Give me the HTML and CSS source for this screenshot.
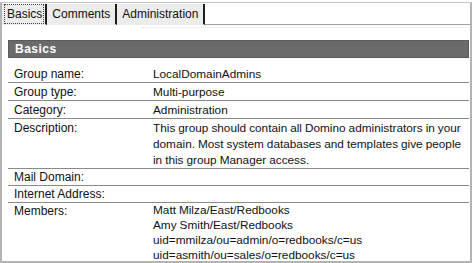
FILE: index.html
```html
<!DOCTYPE html>
<html lang="en">
<head>
  <meta charset="UTF-8" />
  <title>Group - Basics</title>
  <link rel="stylesheet" href="styles.css">
</head>
<body>
  <div class="window">
    <div class="tabs">
      <div class="tab active"><span>Basics</span></div>
      <div class="tab"><span>Comments</span></div>
      <div class="tab"><span>Administration</span></div>
      <div class="tab-fill"></div>
    </div>
    <div class="dots"></div>

    <div class="content">
      <div class="section-title">Basics</div>

      <div class="row">
        <div class="label">Group name:</div>
        <div class="value">LocalDomainAdmins</div>
      </div>
      <div class="row">
        <div class="label">Group type:</div>
        <div class="value">Multi-purpose</div>
      </div>
      <div class="row">
        <div class="label">Category:</div>
        <div class="value">Administration</div>
      </div>
      <div class="row">
        <div class="label">Description:</div>
        <div class="value">This group should contain all Domino administrators in your domain. Most system databases and templates give people in this group Manager access.</div>
      </div>
      <div class="row short">
        <div class="label">Mail Domain:</div>
        <div class="value"></div>
      </div>
      <div class="row short">
        <div class="label">Internet Address:</div>
        <div class="value"></div>
      </div>
      <div class="row members">
        <div class="label">Members:</div>
        <div class="value">
          Matt Milza/East/Redbooks<br>
          Amy Smith/East/Redbooks<br>
          uid=mmilza/ou=admin/o=redbooks/c=us<br>
          uid=asmith/ou=sales/o=redbooks/c=us
        </div>
      </div>
    </div>
  </div>
</body>
</html>
```

FILE: styles.css
```css
body {
  margin: 0;
  padding-top: 2px;
  background: #fff;
  font-family: "Liberation Sans", Arial, sans-serif;
  font-size: 12px;
  color: #111;
}

.window {
  height: 261px;
  box-sizing: border-box;
  border: 2px solid #b3b3b3;
  border-top: 1px solid #c4c4c4;
  overflow: hidden;
}

.tabs {
  display: flex;
  height: 22px;
}

.tab {
  display: flex;
  align-items: center;
  margin-top: 1px;
  padding: 0 2px;
  background: #ececec;
  border-right: 2px solid #1e1e1e;
  border-bottom: 1px solid #ececec;
}

.tab span {
  padding: 1px 2px;
  border: 1px solid transparent;
  line-height: 16px;
}

.tab.active {
  padding-left: 2px;
  padding-right: 1px;
}

.tab.active span {
  padding: 1px 1px 1px 2px;
  border: 1px dotted #444;
}

.tab-fill {
  flex: 1;
  border-bottom: 1px solid #a0a0a0;
}

.dots {
  height: 2px;
  margin: 0 4px 0 140px;
  border-bottom: 1px dotted #e2e2e2;
}

.content {
  padding: 12px 1px 0 6px;
}

.section-title {
  height: 16px;
  line-height: 16px;
  padding-left: 6px;
  margin-bottom: 7px;
  background: #6b6b6b;
  border: 1px solid #5a5a5a;
  color: #fff;
  font-weight: bold;
  font-size: 12px;
  letter-spacing: 0.5px;
}

.row {
  display: grid;
  grid-template-columns: 139px 1fr;
  padding: 1px 0 0 6px;
  line-height: 16px;
  border-bottom: 1px solid #8a8a8a;
}

.row .value {
  min-height: 16px;
  font-size: 11.8px;
  word-spacing: -0.3px;
}

.row.short {
  line-height: 15px;
}

.row.short .value {
  min-height: 15px;
}

.row.members {
  border-bottom: none;
  line-height: 15px;
}

.row.members .value {
  margin-top: -1px;
}
```
